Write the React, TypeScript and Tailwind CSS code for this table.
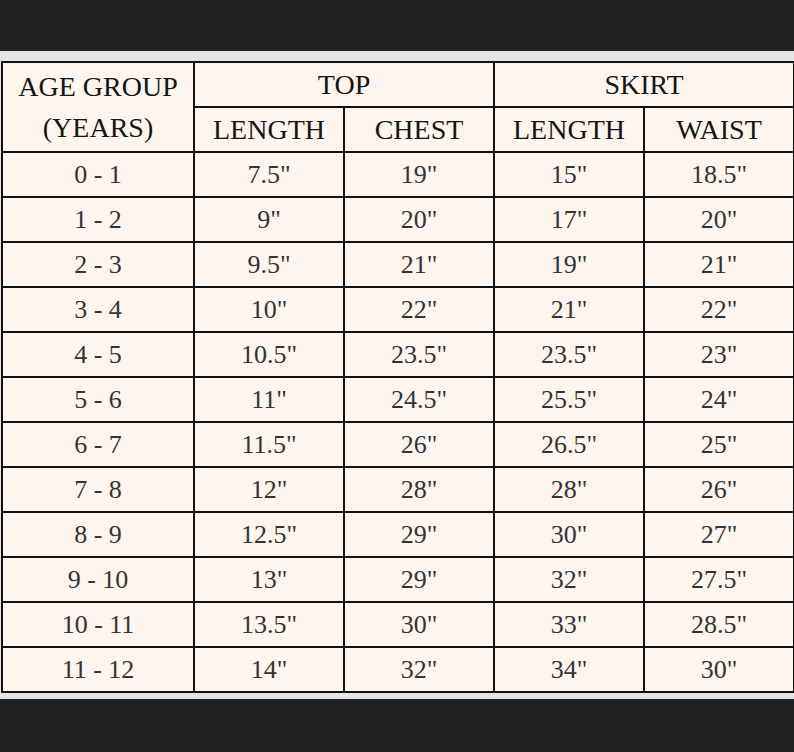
import React from 'react';

const rows: string[][] = [
  ['0 - 1', '7.5"', '19"', '15"', '18.5"'],
  ['1 - 2', '9"', '20"', '17"', '20"'],
  ['2 - 3', '9.5"', '21"', '19"', '21"'],
  ['3 - 4', '10"', '22"', '21"', '22"'],
  ['4 - 5', '10.5"', '23.5"', '23.5"', '23"'],
  ['5 - 6', '11"', '24.5"', '25.5"', '24"'],
  ['6 - 7', '11.5"', '26"', '26.5"', '25"'],
  ['7 - 8', '12"', '28"', '28"', '26"'],
  ['8 - 9', '12.5"', '29"', '30"', '27"'],
  ['9 - 10', '13"', '29"', '32"', '27.5"'],
  ['10 - 11', '13.5"', '30"', '33"', '28.5"'],
  ['11 - 12', '14"', '32"', '34"', '30"'],
];

const cell = 'border-2 border-[#111] bg-[#fdf5ee] text-center p-0';
const head = `${cell} font-normal text-[28px] text-[#151515]`;

const App: React.FC = () => {
  return (
    <div className="w-[794px] h-[752px] bg-[#212121] flex flex-col" style={{ fontFamily: '"Liberation Serif", "Times New Roman", serif' }}>
      <div className="h-[51px] shrink-0" />
      <div className="bg-[#e6e6e6] pt-[10px] pb-[6px] pl-[1px] pr-[1px] shrink-0">
        <table className="table-fixed border-collapse w-[792px]">
          <colgroup>
            <col className="w-[192px]" />
            <col className="w-[150px]" />
            <col className="w-[150px]" />
            <col className="w-[150px]" />
            <col className="w-[150px]" />
          </colgroup>
          <thead>
            <tr className="h-[45px]">
              <th rowSpan={2} className={`${head} leading-[41px]`}>
                AGE GROUP<br />(YEARS)
              </th>
              <th colSpan={2} className={head}>TOP</th>
              <th colSpan={2} className={head}>SKIRT</th>
            </tr>
            <tr className="h-[45px]">
              <th className={head}>LENGTH</th>
              <th className={head}>CHEST</th>
              <th className={head}>LENGTH</th>
              <th className={head}>WAIST</th>
            </tr>
          </thead>
          <tbody>
            {rows.map((r) => (
              <tr key={r[0]} className="h-[45px]">
                {r.map((v, i) => (
                  <td key={i} className={`${cell} text-[26px] text-[#333]`}>{v}</td>
                ))}
              </tr>
            ))}
          </tbody>
        </table>
      </div>
      <div className="flex-1" />
    </div>
  );
};

export default App;
